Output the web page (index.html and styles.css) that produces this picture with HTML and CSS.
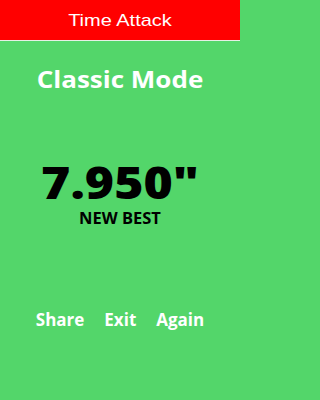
FILE: index.html
```html
<!DOCTYPE html>
<html>
<head>
<meta charset="utf-8">
<link rel="stylesheet" href="styles.css">
</head>
<body>
<div class="screen">
  <header class="bar"><span class="bar-title">Time Attack</span></header>
  <main class="content">
    <h1 class="mode">Classic Mode</h1>
    <div class="result">
      <div class="time">7.950"</div>
      <div class="best">NEW BEST</div>
    </div>
    <nav class="actions">
      <span class="action">Share</span>
      <span class="action">Exit</span>
      <span class="action">Again</span>
    </nav>
  </main>
</div>
</body>
</html>
```

FILE: styles.css
```css
html, body {
  margin: 0;
  padding: 0;
  width: 240px;
  height: 400px;
  overflow: hidden;
  background: #53d66a;
}
.screen {
  width: 240px;
  height: 400px;
  display: flex;
  flex-direction: column;
  background: #53d66a;
}
.bar {
  height: 41px;
  flex: none;
  background: #ff0000;
  border-bottom: 1px solid #e6f0e6;
  color: #fff;
  font-family: "Liberation Sans", Arial, sans-serif;
  font-size: 20px;
  display: flex;
  align-items: center;
  justify-content: center;
  box-sizing: border-box;
}
.bar-title {
  display: inline-block;
  transform: scaleY(0.84);
}
.content {
  flex: 1;
  display: flex;
  flex-direction: column;
  align-items: center;
  font-family: "Open Sans", "Noto Sans", sans-serif;
  font-weight: 700;
}
.mode {
  margin: 23px 0 0;
  font-size: 26px;
  line-height: 30px;
  color: #fff;
  font-weight: 700;
  transform: scaleY(0.9);
}
.result {
  margin-top: 62.7px;
  display: flex;
  flex-direction: column;
  align-items: center;
}
.time {
  font-size: 50px;
  font-weight: 800;
  line-height: 50px;
  color: #000;
  transform: scaleY(0.9);
}
.best {
  margin-top: 3.3px;
  font-size: 16.5px;
  line-height: 16px;
  color: #000;
  transform: scaleY(0.93);
}
.actions {
  margin-top: 84.5px;
  display: flex;
  gap: 20px;
}
.action {
  color: #fff;
  font-size: 17px;
  line-height: 20px;
}
```
